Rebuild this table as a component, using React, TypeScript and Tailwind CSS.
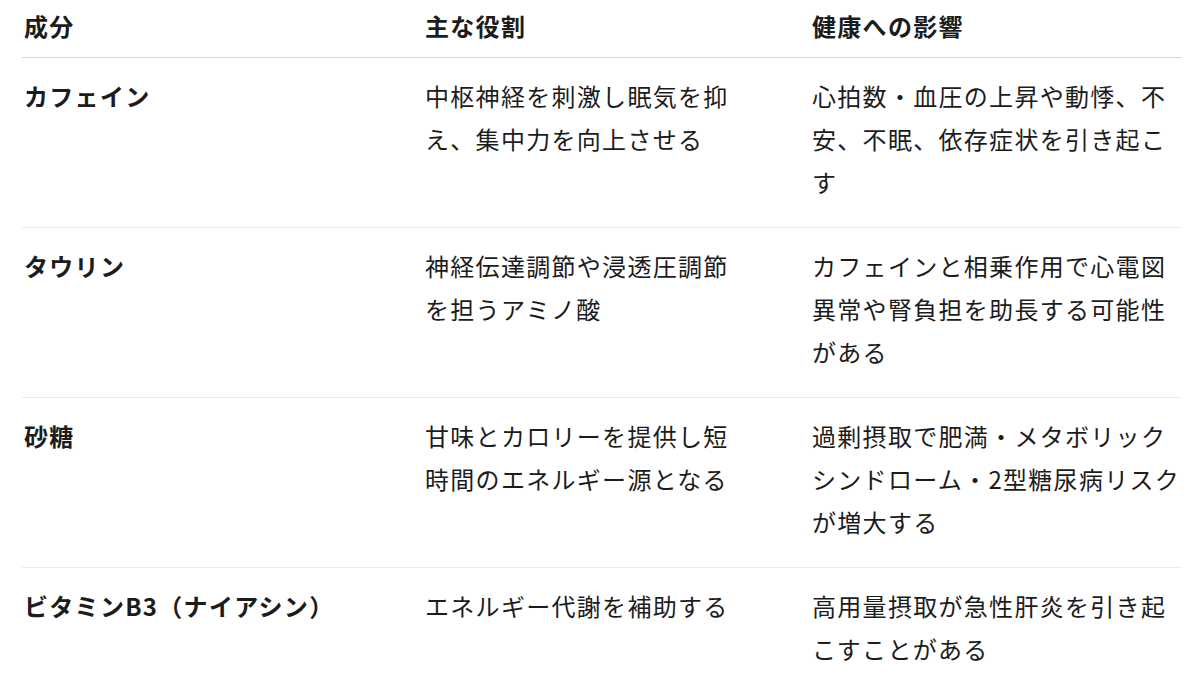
/* ================== Data ================== */
type Row = {
  name: string;
  role: string;
  effect: string;
};

const ROWS: Row[] = [
  {
    name: 'カフェイン',
    role: '中枢神経を刺激し眠気を抑え、集中力を向上させる',
    effect: '心拍数・血圧の上昇や動悸、不安、不眠、依存症状を引き起こす'
  },
  {
    name: 'タウリン',
    role: '神経伝達調節や浸透圧調節を担うアミノ酸',
    effect: 'カフェインと相乗作用で心電図異常や腎負担を助長する可能性がある'
  },
  {
    name: '砂糖',
    role: '甘味とカロリーを提供し短時間のエネルギー源となる',
    effect: '過剰摂取で肥満・メタボリックシンドローム・2型糖尿病リスクが増大する'
  },
  {
    name: 'ビタミンB3（ナイアシン）',
    role: 'エネルギー代謝を補助する',
    effect: '高用量摂取が急性肝炎を引き起こすことがある'
  }
];

export default function App() {
  return (
    <div
      className="min-h-screen bg-white pl-[22px] pr-[18px] text-[24px] leading-[43px] tracking-[1.3px] text-[#1c1c1c]"
      style={{ fontFamily: '"Noto Sans CJK JP", "Noto Sans", sans-serif' }}
    >
      {/* Header */}
      <div className="grid grid-cols-[402px_387px_1fr] border-b border-[#d6d6d6] pt-[4px] pb-[10px] font-bold">
        <div className="pl-[2px]">成分</div>
        <div className="pl-[1px]">主な役割</div>
        <div className="pl-[1px]">健康への影響</div>
      </div>

      {/* Rows */}
      {ROWS.map((row, i) => (
        <div
          key={row.name}
          className={
            i === ROWS.length - 1
              ? 'grid grid-cols-[402px_387px_1fr] pt-[16px] pb-[24px]'
              : 'grid grid-cols-[402px_387px_1fr] border-b border-[#ebebeb] pt-[16px] pb-[24px]'
          }
        >
          <div className="pl-[2px] font-bold">{row.name}</div>
          <div className="pl-[1px] pr-[66px]">{row.role}</div>
          <div className="pl-[1px]">{row.effect}</div>
        </div>
      ))}
    </div>
  );
}
